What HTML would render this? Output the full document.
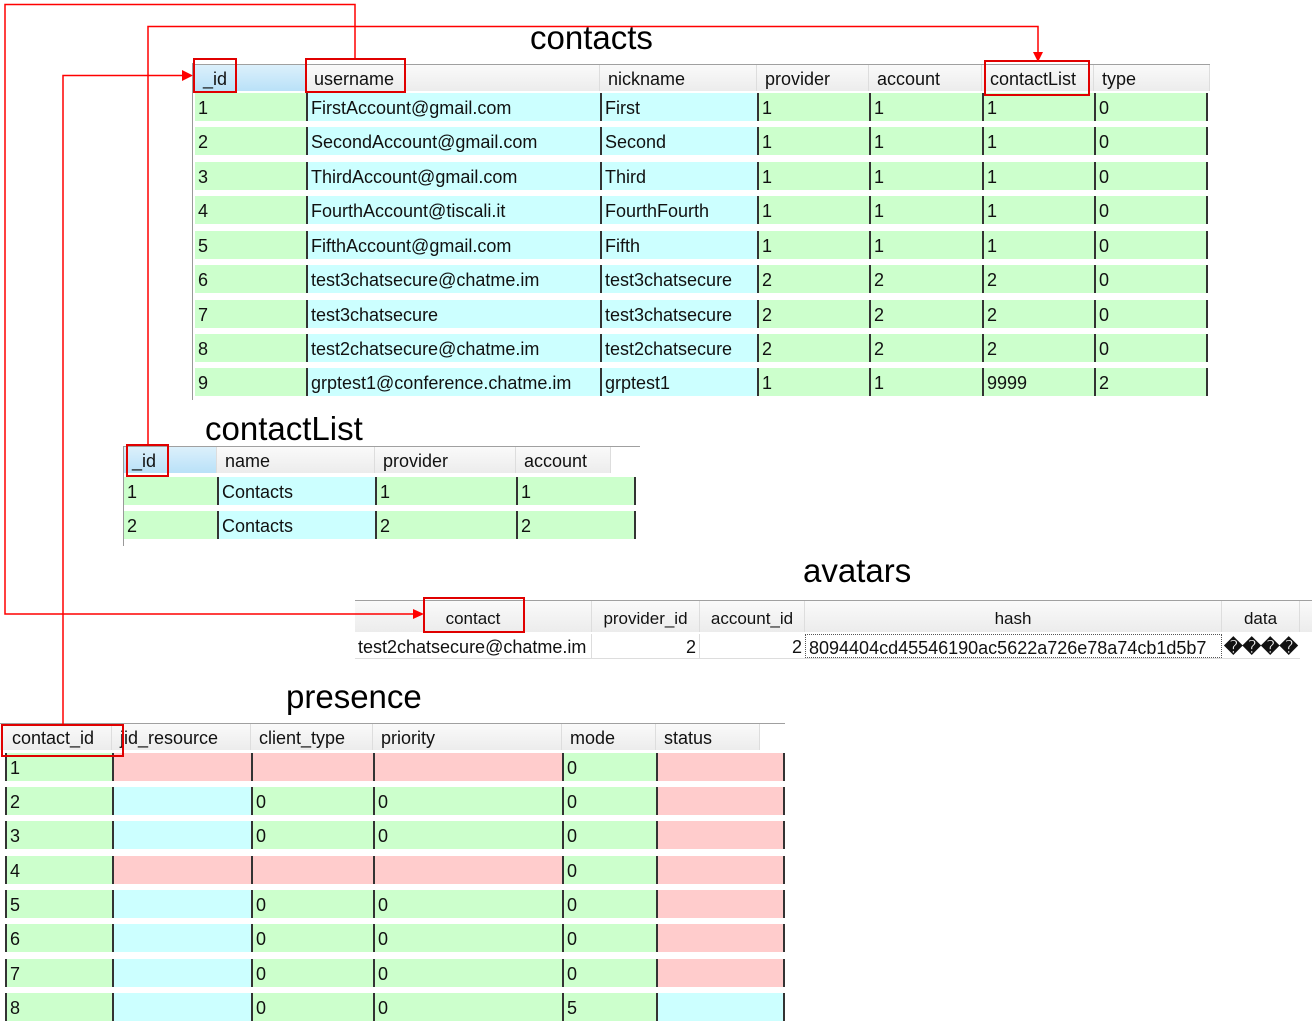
<!DOCTYPE html>
<html><head><meta charset="utf-8"><style>
body{margin:0;width:1312px;height:1024px;background:#fff;position:relative;overflow:hidden;font-family:"Liberation Sans",sans-serif;color:#111}
.a{position:absolute}
.t{position:absolute;font-size:33px;color:#000;line-height:1}
.r{position:absolute;display:flex;height:28px;font-size:18px;line-height:31px}
.r div{box-sizing:border-box;padding-left:3px;white-space:nowrap;overflow:hidden;border-left:2px solid #333}
.r div:first-child{border-left:none}
.g{background:#ccffcc}.c{background:#ccffff}.p{background:#ffcccc}
.h{position:absolute;display:flex;height:26px;font-size:18px;line-height:29px;background:linear-gradient(#fafafa,#ececec);border-top:1px solid #a0a0a0}
.h div{box-sizing:border-box;padding-left:8px;border-right:1px solid #ddd;white-space:nowrap;overflow:hidden}
.h .b{background:linear-gradient(#dcf0fb,#b9e1f8)}
.box{position:absolute;border:2px solid #e00000;box-sizing:border-box}
</style></head><body>

<div class="t" style="left:530px;top:21px">contacts</div>
<div class="t" style="left:205px;top:412px">contactList</div>
<div class="t" style="left:803px;top:554px">avatars</div>
<div class="t" style="left:286px;top:680px">presence</div>

<!-- contacts -->
<div class="a" style="left:192px;top:63px;width:1px;height:337px;background:#999"></div>
<div class="h" style="left:195px;top:64px;width:1015px">
<div class="b" style="width:111px">_id</div><div style="width:294px">username</div><div style="width:157px">nickname</div><div style="width:112px">provider</div><div style="width:113px">account</div><div style="width:112px">contactList</div><div style="width:116px">type</div></div>
<div class="r" style="left:195px;top:93px"><div class="g" style="width:111px">1</div><div class="c" style="width:294px">FirstAccount@gmail.com</div><div class="c" style="width:157px">First</div><div class="g" style="width:112px">1</div><div class="g" style="width:113px">1</div><div class="g" style="width:112px">1</div><div class="g" style="width:114px;border-right:2px solid #333">0</div></div>
<div class="r" style="left:195px;top:127px"><div class="g" style="width:111px">2</div><div class="c" style="width:294px">SecondAccount@gmail.com</div><div class="c" style="width:157px">Second</div><div class="g" style="width:112px">1</div><div class="g" style="width:113px">1</div><div class="g" style="width:112px">1</div><div class="g" style="width:114px;border-right:2px solid #333">0</div></div>
<div class="r" style="left:195px;top:162px"><div class="g" style="width:111px">3</div><div class="c" style="width:294px">ThirdAccount@gmail.com</div><div class="c" style="width:157px">Third</div><div class="g" style="width:112px">1</div><div class="g" style="width:113px">1</div><div class="g" style="width:112px">1</div><div class="g" style="width:114px;border-right:2px solid #333">0</div></div>
<div class="r" style="left:195px;top:196px"><div class="g" style="width:111px">4</div><div class="c" style="width:294px">FourthAccount@tiscali.it</div><div class="c" style="width:157px">FourthFourth</div><div class="g" style="width:112px">1</div><div class="g" style="width:113px">1</div><div class="g" style="width:112px">1</div><div class="g" style="width:114px;border-right:2px solid #333">0</div></div>
<div class="r" style="left:195px;top:231px"><div class="g" style="width:111px">5</div><div class="c" style="width:294px">FifthAccount@gmail.com</div><div class="c" style="width:157px">Fifth</div><div class="g" style="width:112px">1</div><div class="g" style="width:113px">1</div><div class="g" style="width:112px">1</div><div class="g" style="width:114px;border-right:2px solid #333">0</div></div>
<div class="r" style="left:195px;top:265px"><div class="g" style="width:111px">6</div><div class="c" style="width:294px">test3chatsecure@chatme.im</div><div class="c" style="width:157px">test3chatsecure</div><div class="g" style="width:112px">2</div><div class="g" style="width:113px">2</div><div class="g" style="width:112px">2</div><div class="g" style="width:114px;border-right:2px solid #333">0</div></div>
<div class="r" style="left:195px;top:300px"><div class="g" style="width:111px">7</div><div class="c" style="width:294px">test3chatsecure</div><div class="c" style="width:157px">test3chatsecure</div><div class="g" style="width:112px">2</div><div class="g" style="width:113px">2</div><div class="g" style="width:112px">2</div><div class="g" style="width:114px;border-right:2px solid #333">0</div></div>
<div class="r" style="left:195px;top:334px"><div class="g" style="width:111px">8</div><div class="c" style="width:294px">test2chatsecure@chatme.im</div><div class="c" style="width:157px">test2chatsecure</div><div class="g" style="width:112px">2</div><div class="g" style="width:113px">2</div><div class="g" style="width:112px">2</div><div class="g" style="width:114px;border-right:2px solid #333">0</div></div>
<div class="r" style="left:195px;top:368px"><div class="g" style="width:111px">9</div><div class="c" style="width:294px">grptest1@conference.chatme.im</div><div class="c" style="width:157px">grptest1</div><div class="g" style="width:112px">1</div><div class="g" style="width:113px">1</div><div class="g" style="width:112px">9999</div><div class="g" style="width:114px;border-right:2px solid #333">2</div></div>

<!-- contactList -->
<div class="a" style="left:123px;top:446px;width:1px;height:100px;background:#999"></div>
<div class="h" style="left:124px;top:446px;width:516px">
<div class="b" style="width:93px">_id</div><div style="width:158px">name</div><div style="width:141px">provider</div><div style="width:95px">account</div><div style="width:29px;border:none;background:#fff"></div></div>
<div class="r" style="left:124px;top:477px"><div class="g" style="width:93px">1</div><div class="c" style="width:158px">Contacts</div><div class="g" style="width:141px">1</div><div class="g" style="width:120px;border-right:2px solid #333">1</div></div>
<div class="r" style="left:124px;top:511px"><div class="g" style="width:93px">2</div><div class="c" style="width:158px">Contacts</div><div class="g" style="width:141px">2</div><div class="g" style="width:120px;border-right:2px solid #333">2</div></div>

<!-- avatars -->
<div class="h" style="left:355px;top:600px;width:957px;height:31px;line-height:35px;font-size:17px">
<div style="width:237px;text-align:center;padding:0">contact</div><div style="width:108px;text-align:center;padding:0">provider_id</div><div style="width:105px;text-align:center;padding:0">account_id</div><div style="width:417px;text-align:center;padding:0">hash</div><div style="width:78px;text-align:center;padding:0">data</div></div>
<div class="a" style="left:355px;top:634px;display:flex;height:24px;font-size:18px;line-height:26px;border-bottom:1px solid #ddd">
<div style="width:237px;padding-left:3px;box-sizing:border-box;border-right:1px solid #ddd;white-space:nowrap">test2chatsecure@chatme.im</div>
<div style="width:108px;text-align:right;padding-right:3px;box-sizing:border-box;border-right:1px solid #ddd">2</div>
<div style="width:105px;text-align:right;padding-right:3px;box-sizing:border-box">2</div>
<div style="width:417px;padding-left:3px;box-sizing:border-box;border:1px dotted #555;white-space:nowrap;overflow:hidden">8094404cd45546190ac5622a726e78a74cb1d5b7</div>
<div style="width:78px;text-align:center;font-weight:bold">&#xFFFD;&#xFFFD;&#xFFFD;&#xFFFD;</div></div>

<!-- presence -->
<div class="h" style="left:0;top:723px;width:785px">
<div style="width:112px;padding-left:12px">contact_id</div><div style="width:139px">jid_resource</div><div style="width:122px">client_type</div><div style="width:189px">priority</div><div style="width:94px">mode</div><div style="width:104px">status</div><div style="width:25px;border:none;background:#fff"></div></div>
<div class="r" style="left:5px;top:753px"><div class="g" style="width:107px;border-left:2px solid #333">1</div><div class="p" style="width:139px"></div><div class="p" style="width:122px"></div><div class="p" style="width:189px"></div><div class="g" style="width:94px">0</div><div class="p" style="width:129px;border-right:2px solid #333"></div></div>
<div class="r" style="left:5px;top:787px"><div class="g" style="width:107px;border-left:2px solid #333">2</div><div class="c" style="width:139px"></div><div class="g" style="width:122px">0</div><div class="g" style="width:189px">0</div><div class="g" style="width:94px">0</div><div class="p" style="width:129px;border-right:2px solid #333"></div></div>
<div class="r" style="left:5px;top:821px"><div class="g" style="width:107px;border-left:2px solid #333">3</div><div class="c" style="width:139px"></div><div class="g" style="width:122px">0</div><div class="g" style="width:189px">0</div><div class="g" style="width:94px">0</div><div class="p" style="width:129px;border-right:2px solid #333"></div></div>
<div class="r" style="left:5px;top:856px"><div class="g" style="width:107px;border-left:2px solid #333">4</div><div class="p" style="width:139px"></div><div class="p" style="width:122px"></div><div class="p" style="width:189px"></div><div class="g" style="width:94px">0</div><div class="p" style="width:129px;border-right:2px solid #333"></div></div>
<div class="r" style="left:5px;top:890px"><div class="g" style="width:107px;border-left:2px solid #333">5</div><div class="c" style="width:139px"></div><div class="g" style="width:122px">0</div><div class="g" style="width:189px">0</div><div class="g" style="width:94px">0</div><div class="p" style="width:129px;border-right:2px solid #333"></div></div>
<div class="r" style="left:5px;top:924px"><div class="g" style="width:107px;border-left:2px solid #333">6</div><div class="c" style="width:139px"></div><div class="g" style="width:122px">0</div><div class="g" style="width:189px">0</div><div class="g" style="width:94px">0</div><div class="p" style="width:129px;border-right:2px solid #333"></div></div>
<div class="r" style="left:5px;top:959px"><div class="g" style="width:107px;border-left:2px solid #333">7</div><div class="c" style="width:139px"></div><div class="g" style="width:122px">0</div><div class="g" style="width:189px">0</div><div class="g" style="width:94px">0</div><div class="p" style="width:129px;border-right:2px solid #333"></div></div>
<div class="r" style="left:5px;top:993px"><div class="g" style="width:107px;border-left:2px solid #333">8</div><div class="c" style="width:139px"></div><div class="g" style="width:122px">0</div><div class="g" style="width:189px">0</div><div class="g" style="width:94px">5</div><div class="c" style="width:129px;border-right:2px solid #333"></div></div>

<!-- red boxes -->
<div class="box" style="left:193px;top:58px;width:44px;height:35px"></div>
<div class="box" style="left:305px;top:58px;width:101px;height:35px"></div>
<div class="box" style="left:984px;top:60px;width:106px;height:36px"></div>
<div class="box" style="left:126px;top:444px;width:43px;height:33px"></div>
<div class="box" style="left:423px;top:597px;width:102px;height:36px"></div>
<div class="box" style="left:1px;top:724px;width:123px;height:33px"></div>

<!-- connector lines -->
<svg class="a" style="left:0;top:0" width="1312" height="1024">
<g stroke="#f00" stroke-width="1.5" fill="none">
<polyline points="355,58 355,4.5 5,4.5 5,614 416,614"/>
<polyline points="148,444 148,26.5 1038,26.5 1038,54"/>
<polyline points="63,724 63,75.5 184,75.5"/>
</g>
<g fill="#f00">
<polygon points="424,614 413,609 413,619"/>
<polygon points="1038,62 1033,52 1043,52"/>
<polygon points="193,75.5 182,70 182,81"/>
</g>
</svg>
</body></html>
